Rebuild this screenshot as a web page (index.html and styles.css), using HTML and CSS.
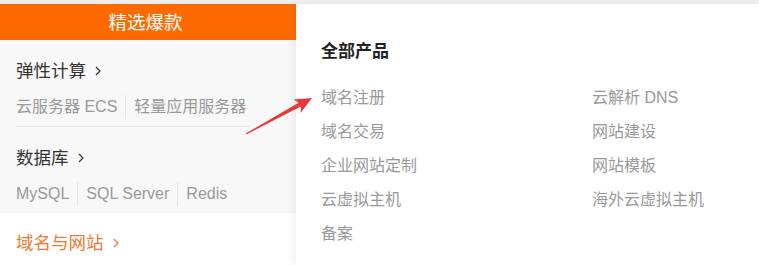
FILE: index.html
```html
<!DOCTYPE html>
<html lang="zh-CN">
<head>
<meta charset="utf-8">
<title>产品菜单</title>
<link rel="stylesheet" href="styles.css">
</head>
<body>
<div class="page">
  <aside class="side">
    <div class="side-head">精选爆款</div>
    <div class="side-body">
      <section class="group">
        <h3 class="group-title">弹性计算<svg class="chev" viewBox="0 0 6 10" width="6" height="10"><path d="M1 1 L5 5 L1 9" fill="none" stroke="currentColor" stroke-width="1.2"/></svg></h3>
        <div class="group-links"><span>云服务器 ECS</span><span>轻量应用服务器</span></div>
      </section>
      <section class="group">
        <h3 class="group-title">数据库<svg class="chev" viewBox="0 0 6 10" width="6" height="10"><path d="M1 1 L5 5 L1 9" fill="none" stroke="currentColor" stroke-width="1.2"/></svg></h3>
        <div class="group-links"><span>MySQL</span><span>SQL Server</span><span>Redis</span></div>
      </section>
    </div>
    <div class="side-foot">
      <h3 class="group-title foot-title">域名与网站<svg class="chev" viewBox="0 0 6 10" width="6" height="10"><path d="M1 1 L5 5 L1 9" fill="none" stroke="currentColor" stroke-width="1.2"/></svg></h3>
    </div>
  </aside>
  <main class="panel">
    <h2 class="panel-title">全部产品</h2>
    <ul class="panel-grid">
      <li>域名注册</li>
      <li>云解析 DNS</li>
      <li>域名交易</li>
      <li>网站建设</li>
      <li>企业网站定制</li>
      <li>网站模板</li>
      <li>云虚拟主机</li>
      <li>海外云虚拟主机</li>
      <li>备案</li>
    </ul>
  </main>
  <svg class="arrow" viewBox="0 0 759 265" width="759" height="265">
    <polygon points="245.7,133.5 298.6,102.8 293.5,99.5 312,98 300.7,112.7 300.8,106.6 246.3,134.5" fill="#e8383d"/>
  </svg>
</div>
</body>
</html>
```
FILE: styles.css
```css
* { box-sizing: border-box; }
html, body {
  margin: 0;
  padding: 0;
  width: 759px;
  height: 265px;
  overflow: hidden;
  background: #efefef;
}
body {
  font-family: "Liberation Sans", "Noto Sans CJK SC", sans-serif;
  color: #333;
}
.page {
  position: relative;
  display: flex;
  margin-top: 4px;
  height: 261px;
}
.side {
  width: 296px;
  flex: none;
  display: flex;
  flex-direction: column;
  background: #fff;
}
.side-head {
  height: 36px;
  line-height: 37px;
  background: #ff6a00;
  color: #fff;
  font-size: 18.5px;
  text-align: center;
  padding-right: 5px;
}
.side-body {
  background: #f8f8f8;
}
.group {
  margin: 0 46px 0 16px;
  padding: 17px 0 7px;
}
.group:first-child {
  border-bottom: 1px solid #e6e6e6;
}
.group-title {
  margin: 0;
  display: flex;
  align-items: center;
  gap: 9px;
  font-size: 17.5px;
  font-weight: normal;
  line-height: 28px;
  color: #333;
}
.group-links {
  margin-top: 10px;
  display: flex;
  font-size: 16px;
  line-height: 24px;
  color: #999;
}
.group-links span + span {
  border-left: 1px solid #e4e4e4;
  margin-left: 8px;
  padding-left: 8px;
}
.side-foot {
  flex: 1;
  background: #fff;
  padding: 16px 16px 0;
}
.foot-title {
  color: #ec7a30;
}
.panel {
  flex: 1;
  background: #fff;
  padding: 36px 0 0 25px;
  box-shadow: -3px 0 8px rgba(0, 0, 0, 0.06);
  position: relative;
}
.panel-title {
  margin: 0 0 17px;
  font-size: 17px;
  font-weight: bold;
  line-height: 24px;
  color: #222;
}
.panel-grid {
  list-style: none;
  margin: 0;
  padding: 0;
  display: grid;
  grid-template-columns: 271px 1fr;
  grid-auto-rows: 34px;
  font-size: 16px;
  line-height: 34px;
  color: #999;
}
.arrow {
  position: absolute;
  left: 0;
  top: -4px;
  pointer-events: none;
}
```
